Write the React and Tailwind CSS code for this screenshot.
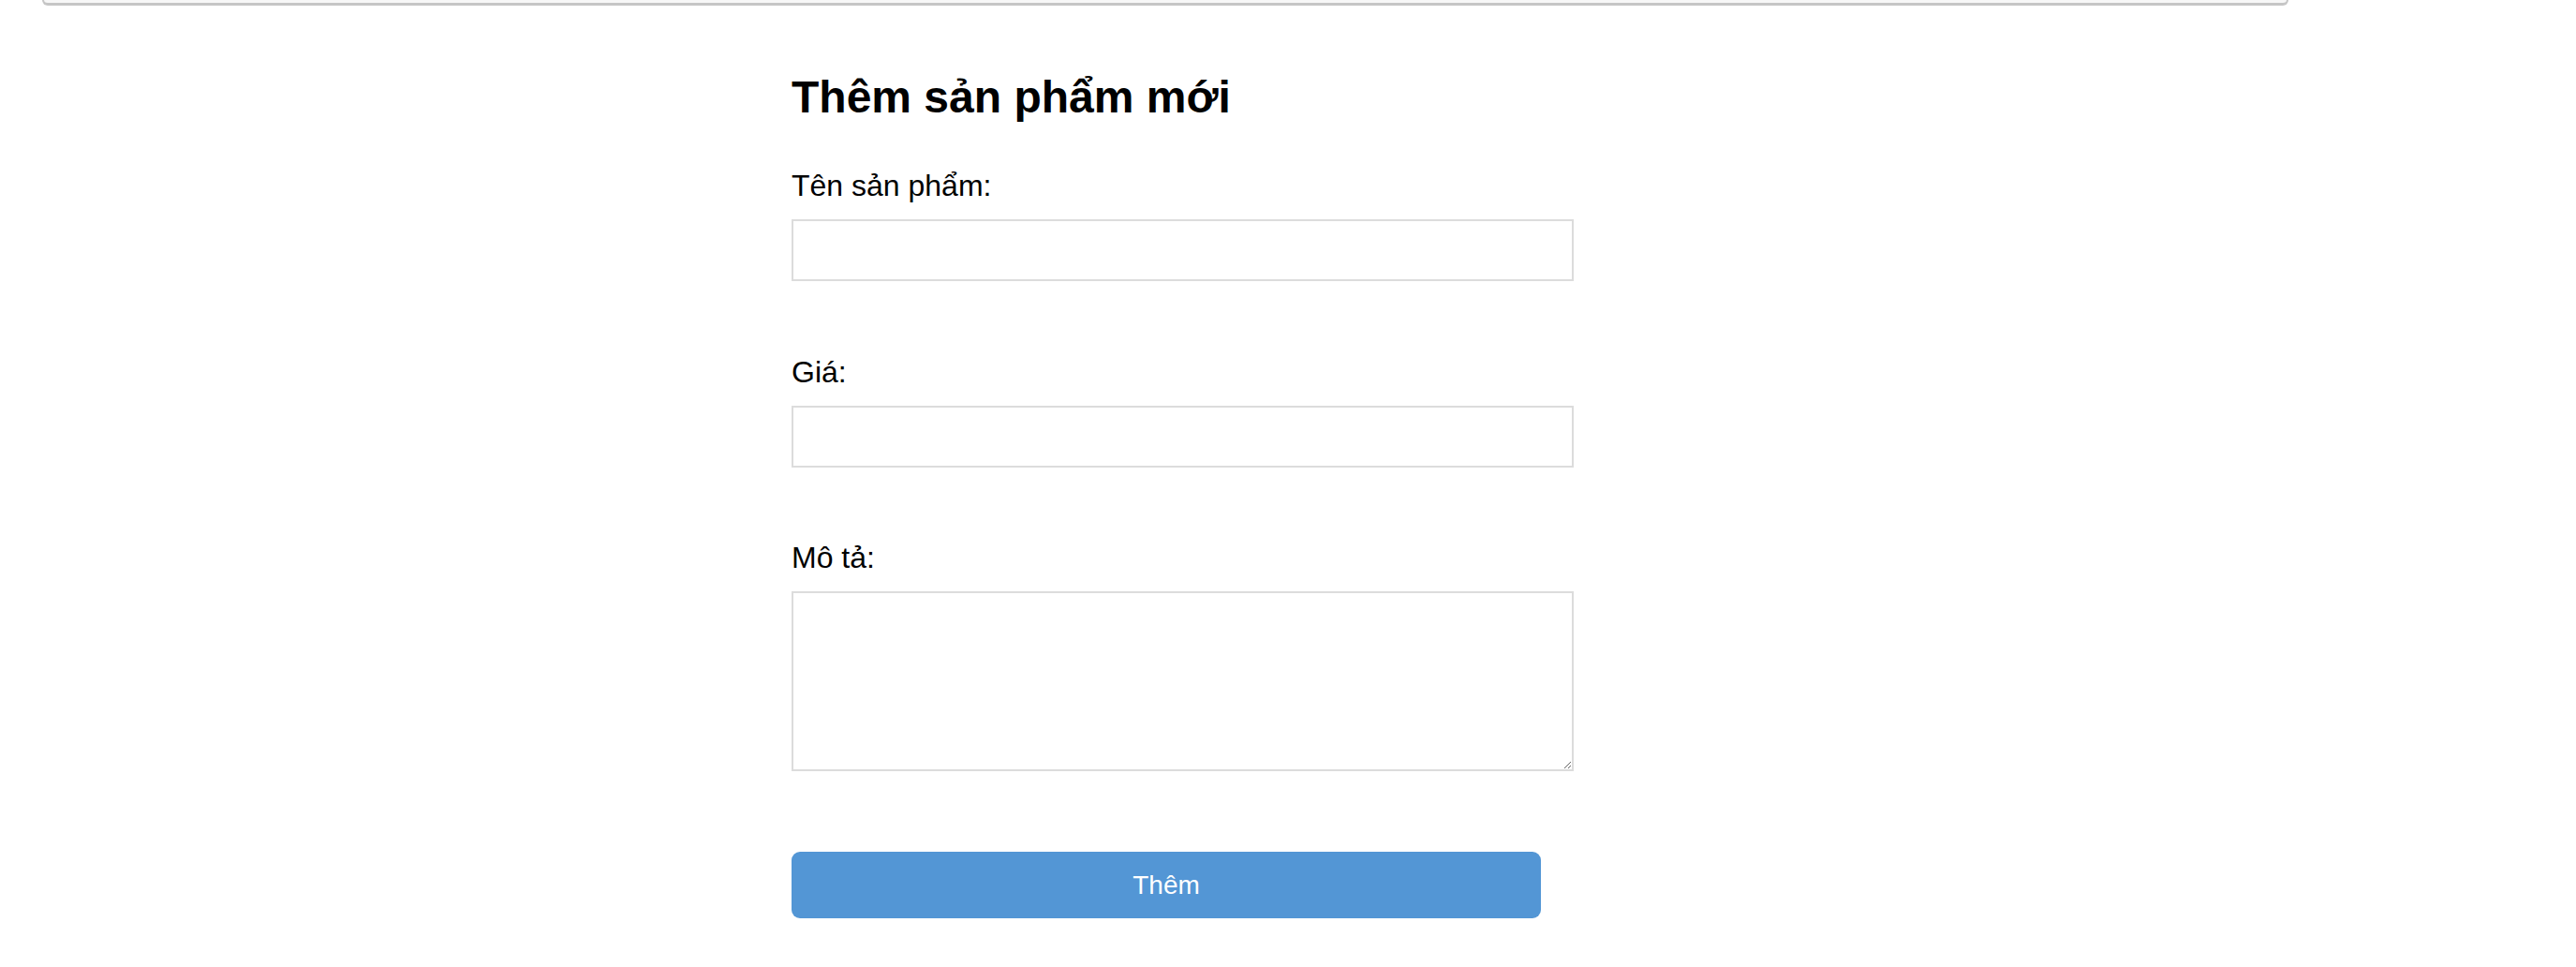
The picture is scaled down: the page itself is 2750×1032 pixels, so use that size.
import React from 'react';

const Field = ({ label, children, className }) => (
  <div className={className}>
    <label className="block text-[32px] leading-[38px] text-black">{label}</label>
    <div className="mt-[17px]">{children}</div>
  </div>
);

export default function App() {
  return (
    <div className="min-h-screen bg-white font-['Liberation_Sans',Arial,sans-serif]">
      <div className="w-[2490px]">
        <div className="ml-[45px] mr-[47px] h-[6px] bg-[#f7f7f7] border-x-2 border-b-[3px] border-[#c6c6c6] rounded-b-[8px]"></div>

        <form className="w-[800px] mx-auto pt-[70px]" onSubmit={(e) => e.preventDefault()}>
          <h2 className="text-[48px] leading-[56px] font-bold text-black">Thêm sản phẩm mới</h2>

          <Field label="Tên sản phẩm:" className="mt-[47px]">
            <input type="text" className="block w-[835px] h-[66px] border-2 border-[#dcdcdc] bg-white outline-none px-4" />
          </Field>

          <Field label="Giá:" className="mt-[78px]">
            <input type="number" className="block w-[835px] h-[66px] border-2 border-[#dcdcdc] bg-white outline-none px-4" />
          </Field>

          <Field label="Mô tả:" className="mt-[77px]">
            <textarea className="block w-[835px] h-[192px] border-2 border-[#dcdcdc] bg-white outline-none px-4 py-2 resize"></textarea>
          </Field>

          <button type="submit" className="mt-[86px] block w-[800px] h-[71px] rounded-[9px] bg-[#5396d5] text-white text-[28px]">
            Thêm
          </button>
        </form>
      </div>
    </div>
  );
}
